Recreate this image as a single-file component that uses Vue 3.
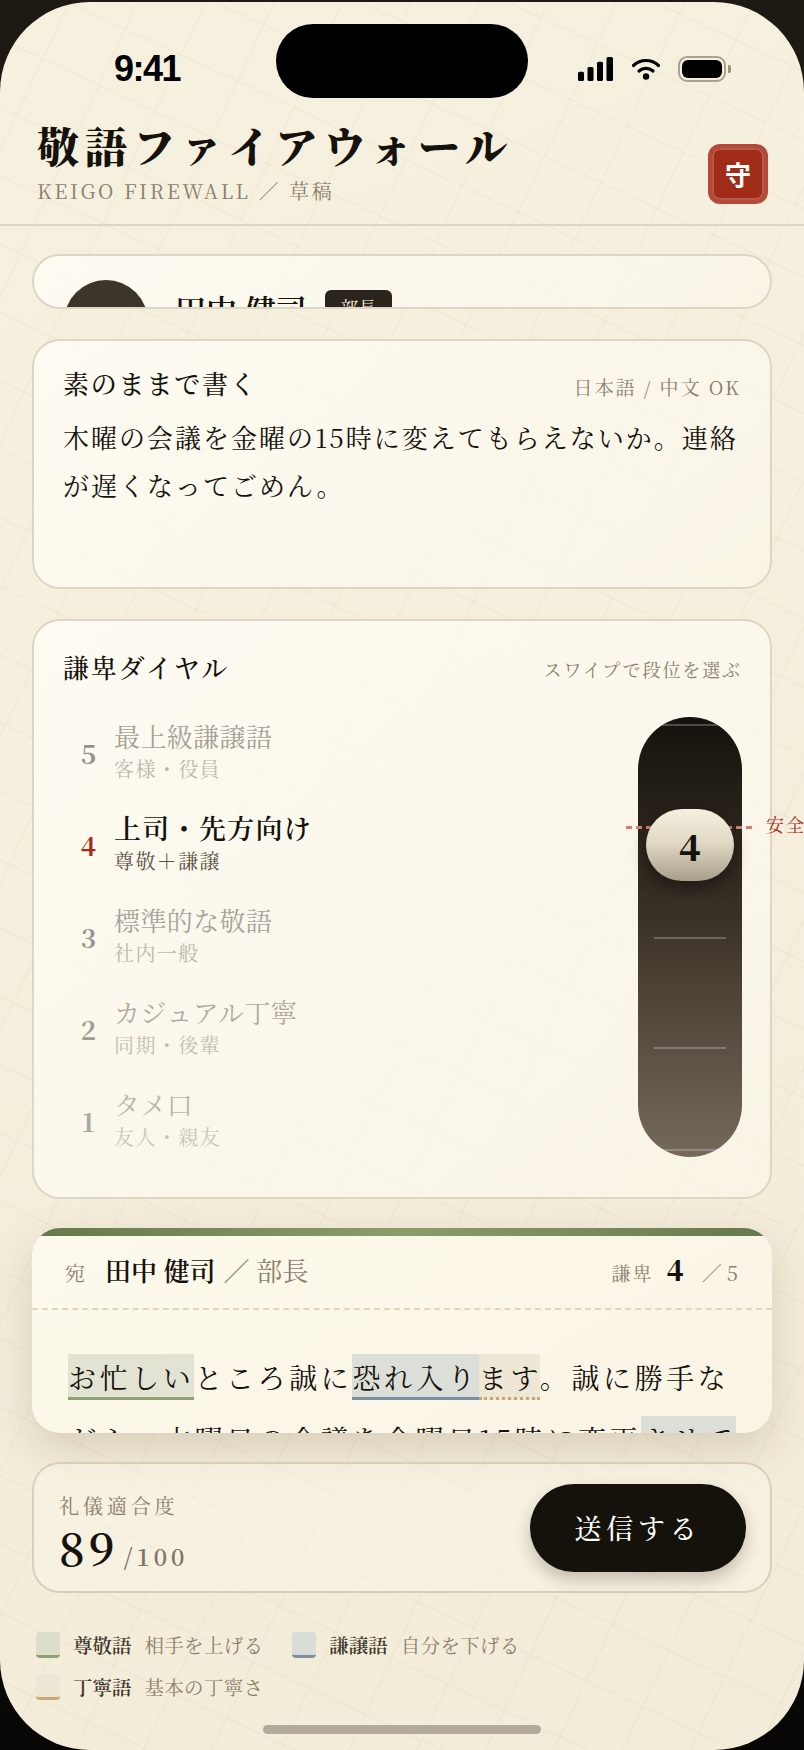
<script setup>
import { ref } from 'vue';

const mono = ref(4);

// 段位の一覧
const levels = [
  { n: 5, label: '最上級謙譲語', sub: '客様・役員', fade: 0.46 },
  { n: 4, label: '上司・先方向け', sub: '尊敬＋謙譲', fade: 1 },
  { n: 3, label: '標準的な敬語', sub: '社内一般', fade: 0.44 },
  { n: 2, label: 'カジュアル丁寧', sub: '同期・後輩', fade: 0.4 },
  { n: 1, label: 'タメ口', sub: '友人・親友', fade: 0.34 },
];

const ticks = [7, 220, 330, 432];

const legend = [
  { name: '尊敬語', desc: '相手を上げる', cls: 'sw-son' },
  { name: '謙譲語', desc: '自分を下げる', cls: 'sw-ken' },
  { name: '丁寧語', desc: '基本の丁寧さ', cls: 'sw-tei' },
];
</script>

<template>
  <div class="phone">
    <div class="screen">
      <div class="island"></div>

      <div class="status">
        <span class="time">9:41</span>
        <div class="status-icons">
          <svg width="36" height="24" viewBox="0 0 36 24">
            <rect x="0" y="14.7" width="6" height="9.3" rx="1.5" />
            <rect x="9.5" y="10" width="6" height="14" rx="1.5" />
            <rect x="19" y="4.7" width="6" height="19.3" rx="1.5" />
            <rect x="28.5" y="0" width="6.5" height="24" rx="1.5" />
          </svg>
          <svg width="28" height="22" viewBox="0 0 28 22">
            <path d="M1.5 7.5 C8.5 0.8 19.5 0.8 26.5 7.5" fill="none" stroke="#000" stroke-width="3.2" stroke-linecap="round" />
            <path d="M7 13 C11 9.4 17 9.4 21 13" fill="none" stroke="#000" stroke-width="3.2" stroke-linecap="round" />
            <circle cx="14" cy="18.5" r="3.2" />
          </svg>
          <div class="battery">
            <div class="battery-body"><div class="battery-fill"></div></div>
            <div class="battery-nub"></div>
          </div>
        </div>
      </div>

      <header class="header">
        <div>
          <h1 class="title">敬語ファイアウォール</h1>
          <p class="subtitle">KEIGO FIREWALL ／ 草稿</p>
        </div>
        <div class="seal">守</div>
      </header>

      <main class="main">
        <section class="card card-person">
          <div class="avatar"></div>
          <div class="person-name">田中 健司</div>
          <div class="badge">部長</div>
        </section>

        <section class="card card-input">
          <div class="card-head">
            <h2>素のままで書く</h2>
            <span class="hint">日本語 / 中文 OK</span>
          </div>
          <p class="draft">木曜の会議を金曜の15時に変えてもらえないか。連絡が遅くなってごめん。</p>
        </section>

        <section class="card card-dial">
          <div class="card-head">
            <h2>謙卑ダイヤル</h2>
            <span class="hint hint-small">スワイプで段位を選ぶ</span>
          </div>
          <div class="dial">
            <ul class="levels">
              <li
                v-for="l in levels"
                :key="l.n"
                class="level"
                :class="{ active: l.n === mono }"
                :style="{ opacity: l.fade }"
              >
                <span class="level-n">{{ l.n }}</span>
                <div>
                  <div class="level-label">{{ l.label }}</div>
                  <div class="level-sub">{{ l.sub }}</div>
                </div>
              </li>
            </ul>
            <div class="track">
              <div class="track-inner">
                <i v-for="t in ticks" :key="t" class="tick" :style="{ top: t + 'px' }"></i>
              </div>
              <div class="safe-line"></div>
              <span class="safe-text">安全</span>
              <div class="knob">4</div>
            </div>
          </div>
        </section>

        <section class="letter">
          <div class="letter-bar"></div>
          <div class="letter-head">
            <div class="to">
              <span class="to-mark">宛</span>
              <strong>田中 健司</strong>
              <span class="to-role">／ 部長</span>
            </div>
            <div class="rank">
              <span class="rank-label">謙卑</span>
              <strong>4</strong>
              <span class="rank-of">／ 5</span>
            </div>
          </div>
          <p class="letter-body"><span class="son">お忙しい</span>ところ誠に<span class="ken">恐れ入り</span><span class="tei">ます</span>。誠に勝手ながら、木曜日の会議を金曜日15時に変更<span class="ken">させて</span>いただけますと幸いです。</p>
        </section>

        <section class="score">
          <div class="score-text">
            <div class="score-label">礼儀適合度</div>
            <div class="score-value">89<small>/100</small></div>
          </div>
          <button class="send">送信する</button>
        </section>

        <div class="legend">
          <div v-for="item in legend" :key="item.name" class="legend-item">
            <i class="swatch" :class="item.cls"></i>
            <b>{{ item.name }}</b>
            <span>{{ item.desc }}</span>
          </div>
        </div>
      </main>

      <div class="home"></div>
    </div>
  </div>
</template>

<style scoped>
.phone {
  width: 804px;
  height: 1750px;
  padding-top: 2px;
  box-sizing: border-box;
  background: linear-gradient(180deg, #1e1913, #090705);
  font-family: "Noto Serif CJK JP", "Liberation Serif", "Noto Sans CJK JP", serif;
  color: #15120c;
  overflow: hidden;
}
.screen {
  position: relative;
  height: 1748px;
  border-radius: 90px;
  overflow: hidden;
  display: flex;
  flex-direction: column;
  background-color: #f5eedd;
  background-image:
    repeating-linear-gradient(25deg, rgba(130, 110, 70, 0.045) 0 1.5px, transparent 1.5px 62px),
    repeating-linear-gradient(115deg, rgba(130, 110, 70, 0.045) 0 1.5px, transparent 1.5px 62px),
    linear-gradient(160deg, #f6f0de, #f3ecd9);
}
.island {
  position: absolute;
  top: 22px;
  left: 276px;
  width: 252px;
  height: 74px;
  border-radius: 37px;
  background: #000;
}
.status {
  height: 106px;
  padding: 0 73px 0 114px;
  display: flex;
  justify-content: space-between;
  align-items: flex-start;
  flex-shrink: 0;
}
.time {
  margin-top: 47px;
  font-family: "Liberation Sans", sans-serif;
  font-size: 36px;
  line-height: 40px;
  font-weight: 700;
  letter-spacing: -1.5px;
  color: #000;
}
.status-icons {
  margin-top: 54px;
  display: flex;
  align-items: center;
  gap: 18px;
}
.battery {
  display: flex;
  align-items: center;
  gap: 2px;
}
.battery-body {
  width: 48px;
  height: 26px;
  box-sizing: border-box;
  border: 2.5px solid #aaa28f;
  border-radius: 9px;
  padding: 2px;
}
.battery-fill {
  height: 100%;
  background: #000;
  border-radius: 6px;
}
.battery-nub {
  width: 3px;
  height: 8px;
  background: #9a927f;
  border-radius: 0 2px 2px 0;
}
.header {
  height: 118px;
  box-sizing: border-box;
  padding: 12px 36px 0 37px;
  display: flex;
  justify-content: space-between;
  align-items: flex-start;
  border-bottom: 2px solid #ddd5c2;
  flex-shrink: 0;
}
.title {
  margin: 0;
  font-size: 42px;
  line-height: 50px;
  font-weight: 900;
  letter-spacing: 6.1px;
  white-space: nowrap;
}
.subtitle {
  margin: 9px 0 0;
  font-size: 20px;
  line-height: 24px;
  letter-spacing: 2.7px;
  color: #8a7f6c;
}
.seal {
  margin-top: 24px;
  width: 60px;
  height: 60px;
  box-sizing: border-box;
  border: 4px solid #b5483a;
  border-radius: 12px;
  background: #a02c18;
  box-shadow: inset 0 0 0 2px rgba(255, 255, 255, 0.22);
  color: #fff;
  font-family: "Noto Sans CJK JP", sans-serif;
  font-size: 26px;
  font-weight: 700;
  line-height: 52px;
  text-align: center;
}
.main {
  padding: 28px 32px 0;
  display: flex;
  flex-direction: column;
}
.card {
  position: relative;
  box-sizing: border-box;
  border: 2px solid #ded6c4;
  border-radius: 28px;
  background: linear-gradient(140deg, rgba(255, 253, 246, 0.85), rgba(250, 246, 234, 0.7));
}
.card-person {
  height: 55px;
  overflow: hidden;
  display: flex;
  align-items: flex-start;
  padding-left: 30px;
}
.avatar {
  width: 84px;
  height: 84px;
  margin-top: 24px;
  border-radius: 50%;
  background: #3d342a;
}
.person-name {
  margin: 35px 0 0 27px;
  font-size: 31px;
  line-height: 36px;
  font-weight: 600;
  white-space: nowrap;
}
.badge {
  margin: 34px 0 0 18px;
  width: 67px;
  height: 34px;
  border-radius: 6px;
  background: #2a241c;
  color: #f5eedd;
  font-size: 18px;
  line-height: 34px;
  text-align: center;
}
.card-input {
  margin-top: 30px;
  height: 250px;
  padding: 24px 29px 0;
}
.card-head {
  display: flex;
  justify-content: space-between;
  align-items: center;
}
h2 {
  margin: 0;
  font-size: 26px;
  line-height: 36px;
  font-weight: 500;
  letter-spacing: 1.8px;
}
.hint {
  margin-top: 6px;
  font-size: 19px;
  letter-spacing: 2.1px;
  color: #8a7f6c;
}
.hint-small {
  margin-top: 4px;
  font-size: 18px;
  letter-spacing: 1.9px;
}
.draft {
  margin: 12px 0 0;
  font-size: 26px;
  line-height: 48px;
  letter-spacing: 2px;
}
.card-dial {
  margin-top: 30px;
  height: 580px;
  padding: 28px 28px 0 29px;
}
.dial {
  margin-top: 24px;
  display: flex;
  justify-content: space-between;
  align-items: center;
}
.levels {
  list-style: none;
  margin: -5px 0 0;
  padding: 0;
}
.level {
  height: 92px;
  display: flex;
  align-items: center;
}
.level-n {
  width: 51px;
  margin-top: 5px;
  text-align: center;
  font-size: 26px;
  line-height: 30px;
  font-weight: 700;
}
.level-label {
  font-size: 26px;
  line-height: 36px;
  letter-spacing: 0.4px;
  color: #3d372c;
}
.level-sub {
  margin-top: 2px;
  font-size: 20px;
  line-height: 26px;
  letter-spacing: 1.4px;
  color: #6f6757;
}
.active .level-n {
  color: #a82c16;
}
.active .level-label {
  font-size: 27px;
  letter-spacing: 1.3px;
  font-weight: 600;
  color: #15120c;
}
.active .level-sub {
  color: #5c5244;
}
.track {
  position: relative;
  width: 104px;
  height: 440px;
  flex-shrink: 0;
}
.track-inner {
  position: relative;
  height: 100%;
  border-radius: 52px;
  overflow: hidden;
  background: linear-gradient(180deg, #15120d, #3a3126 45%, #75695a);
}
.tick {
  position: absolute;
  left: 16px;
  width: 72px;
  height: 2px;
  background: rgba(255, 255, 255, 0.24);
}
.safe-line {
  position: absolute;
  left: -12px;
  top: 109px;
  width: 128px;
  height: 3px;
  background: repeating-linear-gradient(90deg, #cf7f70 0 6px, transparent 6px 10px);
}
.safe-text {
  position: absolute;
  left: 128px;
  top: 95px;
  font-size: 18px;
  line-height: 24px;
  letter-spacing: 2px;
  color: #a8321e;
  white-space: nowrap;
}
.knob {
  position: absolute;
  left: 8px;
  top: 92px;
  width: 88px;
  height: 72px;
  border-radius: 36px;
  background: linear-gradient(180deg, #f6f0e1, #e2d9c6 45%, #a89e8c);
  box-shadow: 0 8px 16px rgba(0, 0, 0, 0.4);
  font-size: 36px;
  font-weight: 900;
  line-height: 74px;
  text-align: center;
}
.letter {
  margin-top: 29px;
  height: 205px;
  border-radius: 28px;
  overflow: hidden;
  background: linear-gradient(150deg, #fdf9ec, #f9f4e4);
  box-shadow: 0 16px 44px rgba(90, 70, 40, 0.18);
  flex-shrink: 0;
}
.letter-bar {
  height: 8px;
  background: linear-gradient(90deg, #66784a, #8a9e6a, #66784a);
}
.letter-head {
  height: 74px;
  box-sizing: border-box;
  padding: 0 34px 6px 33px;
  display: flex;
  justify-content: space-between;
  align-items: center;
  border-bottom: 2px dashed #dfd5bd;
}
.to strong {
  font-size: 26px;
  font-weight: 600;
}
.to-mark {
  font-size: 20px;
  color: #8a7f6c;
  margin-right: 20px;
}
.to-role {
  font-size: 26px;
  color: #8a7f6c;
  margin-left: 8px;
}
.rank-label {
  font-size: 19px;
  letter-spacing: 2px;
  color: #8a7f6c;
}
.rank strong {
  font-size: 28px;
  font-weight: 900;
  margin: 0 18px 0 13px;
}
.rank-of {
  font-size: 20px;
  color: #8a7f6c;
}
.letter-body {
  margin: 36px 0 0;
  padding: 0 28px 0 36px;
  font-size: 28px;
  line-height: 62px;
  letter-spacing: 3.6px;
}
.son,
.ken,
.tei {
  padding: 3px 0 0;
}
.son {
  background: #e2e3d2;
  border-bottom: 3px solid #8fa072;
}
.ken {
  background: #dcdfd8;
  border-bottom: 3px solid #7a8ea6;
}
.tei {
  background: #efe7d6;
  border-bottom: 3px dotted #c8a877;
}
.score {
  margin-top: 29px;
  height: 131px;
  box-sizing: border-box;
  padding: 0 24px 0 25px;
  border: 2px solid #d8cfb9;
  border-radius: 28px;
  background: rgba(252, 248, 236, 0.4);
  display: flex;
  justify-content: space-between;
  align-items: center;
  flex-shrink: 0;
}
.score-text {
  padding-top: 21px;
}
.score-label {
  font-size: 20px;
  line-height: 28px;
  letter-spacing: 3.9px;
  color: #8a7f6c;
}
.score-value {
  margin-top: -2px;
  font-size: 45px;
  line-height: 58px;
  letter-spacing: 4px;
  font-weight: 600;
}
.score-value small {
  margin-left: 5px;
  font-size: 24px;
  letter-spacing: 3.5px;
  font-weight: 600;
  color: #7f7466;
}
.send {
  width: 216px;
  height: 88px;
  border: none;
  border-radius: 44px;
  background: #15120b;
  color: #fff;
  font-family: inherit;
  font-size: 27px;
  font-weight: 500;
  letter-spacing: 4.8px;
  box-shadow: 0 8px 16px rgba(40, 30, 15, 0.24);
}
.legend {
  margin-top: 39px;
  padding-left: 4px;
  display: grid;
  grid-template-columns: repeat(2, max-content);
  column-gap: 29px;
  row-gap: 16px;
}
.legend-item {
  display: flex;
  align-items: center;
  height: 26px;
  font-size: 19.5px;
}
.legend-item b {
  margin: 0 13px 0 13px;
  font-weight: 600;
  color: #3f382c;
}
.legend-item span {
  letter-spacing: 0.3px;
  color: #8a7f6c;
}
.swatch {
  width: 24px;
  height: 26px;
  box-sizing: border-box;
  border-radius: 4px;
  border-bottom: 3px solid;
}
.sw-son {
  background: #dcdeca;
  border-color: #8fa072;
}
.sw-ken {
  background: #d9ddd6;
  border-color: #7a8ea6;
}
.sw-tei {
  background: #efe7d6;
  border-color: #c8a877;
}
.home {
  margin: auto auto 16px;
  width: 278px;
  height: 9px;
  border-radius: 5px;
  background: #b3aa9a;
  flex-shrink: 0;
}
</style>
